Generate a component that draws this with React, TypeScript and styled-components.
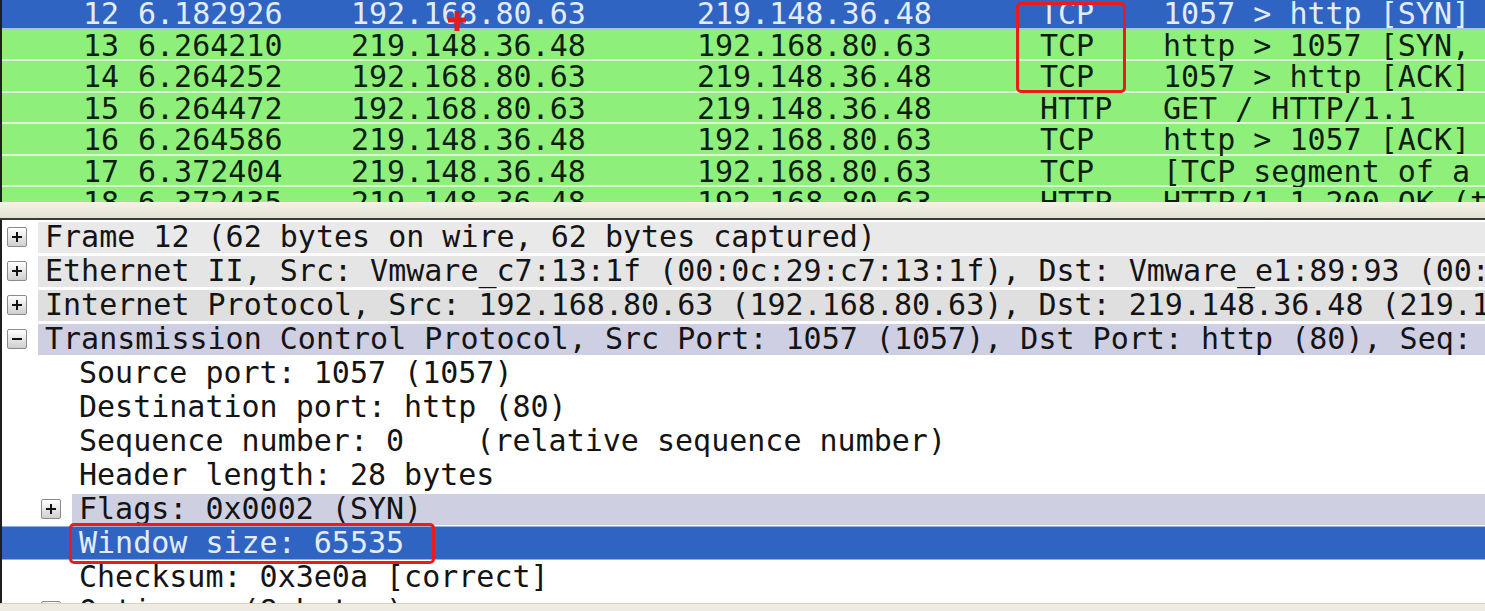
import React from "react";
import styled, { createGlobalStyle } from "styled-components";

const Global = createGlobalStyle`
  html, body { margin: 0; padding: 0; background: #ffffff; overflow: hidden; }
  #root { width: 1485px; height: 611px; }
`;

const mono = `"DejaVu Sans Mono", "Liberation Mono", monospace`;

const Screen = styled.div`
  position: relative;
  width: 1485px;
  height: 611px;
  overflow: hidden;
  display: flex;
  flex-direction: column;
  font-family: ${mono};
  font-size: 30px;
  color: #141414;
  background: #ffffff;
`;

const PacketList = styled.div`
  height: 202px;
  flex: none;
  overflow: hidden;
  border-left: 2px solid #1e1e1e;
  background: #ffffff;
`;

const PacketRows = styled.div`
  margin-top: -2px;
  display: flex;
  flex-direction: column;
`;

const PacketRow = styled.div<{ $selected?: boolean }>`
  display: grid;
  grid-template-columns: 126px 213px 346px 343px 124px 1fr;
  flex: none;
  height: 29.5px;
  line-height: 31.5px;
  white-space: nowrap;
  background: ${(p) => (p.$selected ? "#3064c2" : "#8ef07b")};
  color: ${(p) => (p.$selected ? "#e3ecfd" : "#0f1f0f")};
  border-bottom: 2px solid ${(p) => (p.$selected ? "#a9c3ee" : "#d9f7d2")};
`;

const Cell = styled.div<{ $right?: boolean }>`
  overflow: hidden;
  height: 29.5px;
  text-align: ${(p) => (p.$right ? "right" : "left")};
  padding: ${(p) => (p.$right ? "0 9px 0 0" : "0 0 0 10px")};
`;

const InfoCell = styled.div`
  padding-left: 9px;
  height: 29.5px;
  overflow: visible;
`;

const Splitter = styled.div`
  height: 16px;
  flex: none;
  background: linear-gradient(#f4f2ea, #e4e1d4);
  border-bottom: 2px solid #3a3a3a;
`;

const Details = styled.div`
  flex: 1;
  overflow: hidden;
  border-left: 2px solid #1e1e1e;
  background: #ffffff;
  display: flex;
  flex-direction: column;
`;

const TreeRow = styled.div<{ $level: number; $selected?: boolean }>`
  display: flex;
  align-items: center;
  flex: none;
  height: 34px;
  padding-left: ${(p) => 5 + p.$level * 34}px;
  white-space: nowrap;
  background: ${(p) => (p.$selected ? "#3064c2" : "transparent")};
  color: ${(p) => (p.$selected ? "#e3ecfd" : "#141414")};
  border-top: ${(p) => (p.$selected ? "1px solid #8fb0e6" : "0")};
  border-bottom: ${(p) => (p.$selected ? "1px solid #8fb0e6" : "0")};
  box-sizing: border-box;
`;

const ExpanderSlot = styled.div`
  width: 31px;
  flex: none;
  display: flex;
  align-items: center;
`;

const Expander = styled.span<{ $open?: boolean }>`
  position: relative;
  display: block;
  width: 20px;
  height: 20px;
  box-sizing: border-box;
  border: 1px solid #8a8a8a;
  border-radius: 2px;
  background: linear-gradient(#ffffff, #cfcfcf);
  &::before {
    content: "";
    position: absolute;
    left: 4px;
    right: 4px;
    top: 8px;
    height: 2px;
    background: #111;
  }
  &::after {
    content: "";
    display: ${(p) => (p.$open ? "none" : "block")};
    position: absolute;
    top: 4px;
    bottom: 4px;
    left: 8px;
    width: 2px;
    background: #111;
  }
`;

const Label = styled.div<{ $tone?: string }>`
  flex: 1;
  height: 31px;
  line-height: 30px;
  padding-left: 7px;
  background: ${(p) => p.$tone ?? "transparent"};
`;

const BottomStrip = styled.div`
  height: 8px;
  flex: none;
  background: #eeece2;
  border-top: 1px solid #d6d3c6;
  box-sizing: border-box;
`;

const Annotation = styled.div<{ $x: number; $y: number; $w: number; $h: number }>`
  position: absolute;
  left: ${(p) => p.$x}px;
  top: ${(p) => p.$y}px;
  width: ${(p) => p.$w}px;
  height: ${(p) => p.$h}px;
  box-sizing: border-box;
  border: 3px solid #ec1a1a;
  border-radius: 5px;
  pointer-events: none;
`;

const Cursor = styled.svg`
  position: absolute;
  left: 446px;
  top: 9px;
  width: 22px;
  height: 24px;
`;

type Packet = { no: string; time: string; src: string; dst: string; proto: string; info: string; selected?: boolean };

const packets: Packet[] = [
  { no: "12", time: "6.182926", src: "192.168.80.63", dst: "219.148.36.48", proto: "TCP", info: "1057 > http [SYN] Seq=0 Win=65535 Len=0 MSS=1460", selected: true },
  { no: "13", time: "6.264210", src: "219.148.36.48", dst: "192.168.80.63", proto: "TCP", info: "http > 1057 [SYN, ACK] Seq=0 Ack=1 Win=5840 Len=0 MSS=1460" },
  { no: "14", time: "6.264252", src: "192.168.80.63", dst: "219.148.36.48", proto: "TCP", info: "1057 > http [ACK] Seq=1 Ack=1 Win=65535 Len=0" },
  { no: "15", time: "6.264472", src: "192.168.80.63", dst: "219.148.36.48", proto: "HTTP", info: "GET / HTTP/1.1" },
  { no: "16", time: "6.264586", src: "219.148.36.48", dst: "192.168.80.63", proto: "TCP", info: "http > 1057 [ACK] Seq=1 Ack=420 Win=6432 Len=0" },
  { no: "17", time: "6.372404", src: "219.148.36.48", dst: "192.168.80.63", proto: "TCP", info: "[TCP segment of a reassembled PDU]" },
  { no: "18", time: "6.372435", src: "219.148.36.48", dst: "192.168.80.63", proto: "HTTP", info: "HTTP/1.1 200 OK (text/html)" },
];

type Node = { level: number; text: string; expander?: "open" | "closed"; tone?: string; selected?: boolean };

const tree: Node[] = [
  { level: 0, expander: "closed", tone: "#e9e9e9", text: "Frame 12 (62 bytes on wire, 62 bytes captured)" },
  { level: 0, expander: "closed", tone: "#e5e5e5", text: "Ethernet II, Src: Vmware_c7:13:1f (00:0c:29:c7:13:1f), Dst: Vmware_e1:89:93 (00:50:56:e1:89:93)" },
  { level: 0, expander: "closed", tone: "#dfdfdf", text: "Internet Protocol, Src: 192.168.80.63 (192.168.80.63), Dst: 219.148.36.48 (219.148.36.48)" },
  { level: 0, expander: "open", tone: "#cfcfe3", text: "Transmission Control Protocol, Src Port: 1057 (1057), Dst Port: http (80), Seq: 0, Len: 0" },
  { level: 1, text: "Source port: 1057 (1057)" },
  { level: 1, text: "Destination port: http (80)" },
  { level: 1, text: "Sequence number: 0    (relative sequence number)" },
  { level: 1, text: "Header length: 28 bytes" },
  { level: 1, expander: "closed", tone: "#cfcfe2", text: "Flags: 0x0002 (SYN)" },
  { level: 1, selected: true, text: "Window size: 65535" },
  { level: 1, text: "Checksum: 0x3e0a [correct]" },
  { level: 1, expander: "closed", text: "Options: (8 bytes)" },
];

export default function App() {
  return (
    <Screen>
      <Global />
      <PacketList>
        <PacketRows>
          {packets.map((p) => (
            <PacketRow key={p.no} $selected={p.selected}>
              <Cell $right>{p.no}</Cell>
              <Cell>{p.time}</Cell>
              <Cell>{p.src}</Cell>
              <Cell>{p.dst}</Cell>
              <Cell>{p.proto}</Cell>
              <InfoCell>{p.info}</InfoCell>
            </PacketRow>
          ))}
        </PacketRows>
      </PacketList>
      <Splitter />
      <Details>
        {tree.map((n, i) => (
          <TreeRow key={i} $level={n.level} $selected={n.selected}>
            <ExpanderSlot>{n.expander && <Expander $open={n.expander === "open"} />}</ExpanderSlot>
            <Label $tone={n.selected ? undefined : n.tone}>{n.text.replace(/ /g, "\u00a0")}</Label>
          </TreeRow>
        ))}
      </Details>
      <BottomStrip />
      <Annotation $x={1016} $y={2} $w={110} $h={91} />
      <Annotation $x={69} $y={523} $w={366} $h={41} />
      <Cursor viewBox="0 0 22 24">
        <path d="M11 2 V22 M2 11 H20" stroke="#e51b1b" strokeWidth="5" fill="none" />
      </Cursor>
    </Screen>
  );
}
